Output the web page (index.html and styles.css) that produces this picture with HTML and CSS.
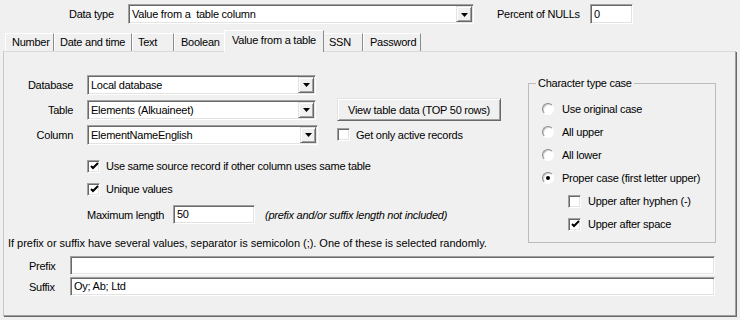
FILE: index.html
```html
<!DOCTYPE html>
<html>
<head>
<meta charset="utf-8">
<title>Value from a table</title>
<link rel="stylesheet" href="styles.css">
</head>
<body>
<div class="top">
  <span class="top-label dt-label">Data type</span>
  <div class="combo combo-dt"><span class="combo-text">Value from a&nbsp; table column</span><span class="combo-btn"><svg width="7" height="4" viewBox="0 0 7 4"><path d="M0 0h7L3.5 4z" fill="#000"/></svg></span></div>
  <span class="top-label pn-label">Percent of NULLs</span>
  <div class="field field-pn">0</div>
</div>

<div class="tabs">
  <div class="tab tab-number">Number</div>
  <div class="tab tab-date">Date and time</div>
  <div class="tab tab-text">Text</div>
  <div class="tab tab-bool">Boolean</div>
  <div class="tab tab-table active">Value from a table</div>
  <div class="tab tab-ssn">SSN</div>
  <div class="tab tab-pass">Password</div>
</div>

<div class="panel">
  <div class="upper">
    <div class="left">
      <div class="src-grid">
        <span class="rlbl">Database</span>
        <div class="combo"><span class="combo-text">Local database</span><span class="combo-btn"><svg width="7" height="4" viewBox="0 0 7 4"><path d="M0 0h7L3.5 4z" fill="#000"/></svg></span></div>
        <span></span>

        <span class="rlbl">Table</span>
        <div class="combo"><span class="combo-text">Elements (Alkuaineet)</span><span class="combo-btn"><svg width="7" height="4" viewBox="0 0 7 4"><path d="M0 0h7L3.5 4z" fill="#000"/></svg></span></div>
        <button class="btn" type="button">View table data (TOP 50 rows)</button>

        <span class="rlbl">Column</span>
        <div class="combo combo-col"><span class="combo-text">ElementNameEnglish</span><span class="combo-btn"><svg width="7" height="4" viewBox="0 0 7 4"><path d="M0 0h7L3.5 4z" fill="#000"/></svg></span></div>
        <div class="chk-row"><span class="chk"></span><span>Get only active records</span></div>
      </div>

      <div class="chk-row opt first-opt"><span class="chk"><svg width="9" height="9" viewBox="0 0 9 9"><path d="M1 4l2 2 5-5" fill="none" stroke="#000" stroke-width="2"/></svg></span><span>Use same source record if other column uses same table</span></div>
      <div class="chk-row opt"><span class="chk"><svg width="9" height="9" viewBox="0 0 9 9"><path d="M1 4l2 2 5-5" fill="none" stroke="#000" stroke-width="2"/></svg></span><span>Unique values</span></div>

      <div class="maxlen">
        <span class="maxlen-label">Maximum length</span>
        <div class="field field-max">50</div>
        <span class="note">(prefix and/or suffix length not included)</span>
      </div>

      <div class="info">If prefix or suffix have several values, separator is semicolon (;). One of these is selected randomly.</div>
    </div>

    <fieldset class="group">
      <legend>Character type case</legend>
      <div class="radio-row"><span class="radio"></span><span>Use original case</span></div>
      <div class="radio-row"><span class="radio"></span><span>All upper</span></div>
      <div class="radio-row"><span class="radio"></span><span>All lower</span></div>
      <div class="radio-row"><span class="radio on"></span><span>Proper case (first letter upper)</span></div>
      <div class="chk-row sub"><span class="chk"></span><span>Upper after hyphen (-)</span></div>
      <div class="chk-row sub"><span class="chk"><svg width="9" height="9" viewBox="0 0 9 9"><path d="M1 4l2 2 5-5" fill="none" stroke="#000" stroke-width="2"/></svg></span><span>Upper after space</span></div>
    </fieldset>
  </div>

  <div class="affix">
    <span class="affix-label">Prefix</span>
    <div class="field"></div>
    <span class="affix-label">Suffix</span>
    <div class="field">Oy; Ab; Ltd</div>
  </div>
</div>
</body>
</html>
```

FILE: styles.css
```css
* { box-sizing: border-box; }

html, body {
  margin: 0;
  background: #f0f0f0;
}

body {
  font: 11px "Liberation Sans", Arial, sans-serif;
  letter-spacing: -0.25px;
  color: #000;
  width: 740px;
  height: 320px;
  overflow: hidden;
}

/* ---------- top bar ---------- */
.top {
  height: 30px;
  display: flex;
  align-items: flex-start;
  padding: 4px 0 0 69px;
}

.top-label { line-height: 20px; }
.dt-label { width: 59px; }
.pn-label { width: 93px; margin-left: 23px; }

/* ---------- sunken controls ---------- */
.combo,
.field {
  height: 20px;
  background: #fff;
  border: 1px solid;
  border-color: #a0a0a0 #fff #fff #a0a0a0;
  box-shadow: inset 1px 1px 0 #696969, inset -1px -1px 0 #e3e3e3;
}

.combo {
  display: flex;
  padding: 1px;
  width: 229px;
}

.combo-dt { width: 346px; }
.combo-col { width: 231px; }

.combo-text {
  flex: 1;
  padding-left: 2px;
  line-height: 16px;
  white-space: nowrap;
}

.combo-btn {
  width: 16px;
  height: 16px;
  display: flex;
  align-items: center;
  justify-content: center;
  background: #f0f0f0;
  border: 1px solid;
  border-color: #e3e3e3 #696969 #696969 #e3e3e3;
  box-shadow: inset 1px 1px 0 #fff, inset -1px -1px 0 #a0a0a0;
}

.combo-btn svg { display: block; margin-top: 1px; }

.field {
  padding: 0 3px;
  line-height: 18px;
  white-space: nowrap;
}

.field-pn { width: 43px; }
.field-max { width: 82px; height: 19px; line-height: 17px; margin-left: 1px; }

/* ---------- tabs ---------- */
.tabs {
  height: 21px;
  display: flex;
  align-items: flex-end;
  padding-left: 5px;
  position: relative;
  z-index: 1;
}

.tab {
  height: 18px;
  flex: none;
  padding-left: 5px;
  line-height: 17px;
  white-space: nowrap;
  overflow: hidden;
  border-left: 1px solid #fff;
  border-top: 1px solid #fff;
  border-right: 1px solid #8c8c8c;
}

.tab-number { width: 49px; padding-left: 6px; }
.tab-date   { width: 78px; }
.tab-text   { width: 42px; }
.tab-bool   { width: 52px; padding-left: 6px; }
.tab-table  { width: 100px; }
.tab-ssn    { width: 41px; padding-left: 6px; }
.tab-pass   { width: 58px; padding-left: 6px; }

.tab.active {
  height: 22px;
  margin: 0 -2px -1px;
  padding-left: 7px;
  line-height: 18px;
  background: #f0f0f0;
  position: relative;
  z-index: 2;
}

/* ---------- panel ---------- */
.panel {
  margin-left: 3px;
  width: 733px;
  height: 265px;
  border: 1px solid;
  border-color: #dadada #a0a0a0 #a0a0a0 #c8c8c8;
  box-shadow: 1px 1px 0 #696969;
}

.upper { display: flex; }

.left {
  width: 524px;
  padding-top: 22px;
}

.src-grid {
  display: grid;
  grid-template-columns: 70px 229px auto;
  grid-template-rows: 21px 21px 21px;
  column-gap: 13px;
  row-gap: 4px;
  align-items: center;
}

.rlbl { text-align: right; padding-right: 1px; }

.btn {
  font: inherit;
  letter-spacing: inherit;
  color: #000;
  width: 164px;
  height: 23px;
  margin-left: 8px;
  padding: 0;
  background: #f0f0f0;
  border: 1px solid;
  border-color: #e3e3e3 #696969 #696969 #e3e3e3;
  box-shadow: inset 1px 1px 0 #fff, inset -1px -1px 0 #a0a0a0;
  align-self: center;
}

.src-grid > .chk-row { margin-left: 8px; }

.chk-row {
  display: flex;
  align-items: center;
  height: 16px;
  gap: 6px;
}

.chk {
  width: 13px;
  height: 13px;
  flex: none;
  display: flex;
  align-items: center;
  justify-content: center;
  background: #fff;
  border: 1px solid;
  border-color: #a0a0a0 #fff #fff #a0a0a0;
  box-shadow: inset 1px 1px 0 #696969, inset -1px -1px 0 #e3e3e3;
}

.chk svg { display: block; margin: 1px 0 0 1px; }

.opt { padding-left: 83px; margin-top: 7px; }
.opt.first-opt { margin-top: 13px; }

.maxlen {
  display: flex;
  align-items: center;
  padding-left: 83px;
  margin-top: 8px;
}

.maxlen-label { width: 85px; }
.note { font-style: italic; margin-left: 10px; }

.info {
  padding-left: 4px;
  margin-top: 13px;
  line-height: 13px;
  letter-spacing: -0.03px;
}

/* ---------- group box ---------- */
.group {
  margin: 25px 0 0 0;
  padding: 11px 0 0 13px;
  width: 188px;
  height: 166px;
  border: 1px solid #bcbcbc;
}

.group legend {
  padding: 0 2px;
  margin-left: -6px;
  line-height: 13px;
}

.radio-row {
  display: flex;
  align-items: center;
  height: 16px;
  gap: 8px;
  margin-bottom: 7px;
}

.radio {
  width: 12px;
  height: 12px;
  flex: none;
  border-radius: 50%;
  background: #fff;
  border: 1px solid;
  border-color: #8a8a8a #fff #fff #8a8a8a;
  box-shadow: inset 1px 1px 0 #d0d0d0;
  display: flex;
  align-items: center;
  justify-content: center;
}

.radio.on::after {
  content: "";
  width: 4px;
  height: 4px;
  border-radius: 50%;
  background: #000;
}

.chk-row.sub {
  padding-left: 26px;
  gap: 7px;
  margin-bottom: 7px;
}

/* ---------- prefix / suffix ---------- */
.affix {
  display: grid;
  grid-template-columns: 41px 645px;
  grid-template-rows: 19px 19px;
  row-gap: 2px;
  align-items: center;
  padding-left: 25px;
  margin-top: 6px;
}

.affix .field { height: 19px; line-height: 17px; }
```
